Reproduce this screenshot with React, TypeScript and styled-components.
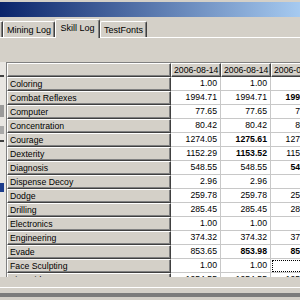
import React from "react";
import styled, { createGlobalStyle, css } from "styled-components";

const GlobalStyle = createGlobalStyle`
  html, body {
    margin: 0;
    padding: 0;
    background: #d4d0c8;
  }
  body {
    font-family: "Liberation Sans", Arial, sans-serif;
    font-size: 8.7px;
    color: #000;
  }
`;

type SkillRow = {
  name: string;
  values: [string, string, string];
  bold?: [boolean, boolean, boolean];
};

const dates = ["2006-08-14", "2006-08-14", "2006-08-14"];

const rows: SkillRow[] = [
  { name: "Coloring", values: ["1.00", "1.00", "1.00"] },
  { name: "Combat Reflexes", values: ["1994.71", "1994.71", "1995.30"], bold: [false, false, true] },
  { name: "Computer", values: ["77.65", "77.65", "77.65"] },
  { name: "Concentration", values: ["80.42", "80.42", "80.42"] },
  { name: "Courage", values: ["1274.05", "1275.61", "1275.61"], bold: [false, true, false] },
  { name: "Dexterity", values: ["1152.29", "1153.52", "1153.52"], bold: [false, true, false] },
  { name: "Diagnosis", values: ["548.55", "548.55", "549.80"], bold: [false, false, true] },
  { name: "Dispense Decoy", values: ["2.96", "2.96", "2.96"] },
  { name: "Dodge", values: ["259.78", "259.78", "259.78"] },
  { name: "Drilling", values: ["285.45", "285.45", "285.45"] },
  { name: "Electronics", values: ["1.00", "1.00", "1.00"] },
  { name: "Engineering", values: ["374.32", "374.32", "374.32"] },
  { name: "Evade", values: ["853.65", "853.98", "854.31"], bold: [false, true, true] },
  { name: "Face Sculpting", values: ["1.00", "1.00", ""] },
  { name: "First Aid", values: ["1954.55", "1954.55", "1954.55"] },
];

const tabs = [
  { label: "Mining Log", width: 52 },
  { label: "Skill Log", width: 45, active: true },
  { label: "TestFonts", width: 47 },
];

function App() {
  return (
    <>
      <GlobalStyle />
      <Window>
        <Caption />
        <TabStrip>
          <TabStub />
          {tabs.map((tab) => (
            <Tab key={tab.label} $active={!!tab.active} $width={tab.width}>
              {tab.label}
            </Tab>
          ))}
        </TabStrip>
        <Panel>
          <ListStub>
            <StubItem $top={13} $height={2} $color="#404040" />
            <StubItem $top={43} $height={12} $color="#9a9a9a" />
            <StubItem $top={64} $height={8} $color="#a8a8a8" />
            <StubItem $top={78} $height={2} $color="#404040" />
            <StubItem $top={121} $height={9} $color="#1c3c8c" />
          </ListStub>
          <Grid>
            <HeaderCell $wide />
            {dates.map((d, i) => (
              <HeaderCell key={i}>{d}</HeaderCell>
            ))}
            {rows.map((row) => (
              <React.Fragment key={row.name}>
                <NameCell>{row.name}</NameCell>
                {row.values.map((v, i) => (
                  <ValueCell
                    key={i}
                    $bold={row.bold ? row.bold[i] : false}
                    $focus={row.name === "Face Sculpting" && i === 2}
                  >
                    {v}
                  </ValueCell>
                ))}
              </React.Fragment>
            ))}
          </Grid>
        </Panel>
        <Footer />
      </Window>
    </>
  );
}

const Window = styled.div`
  width: 300px;
  height: 300px;
  overflow: hidden;
  background: #d4d0c8;
  display: flex;
  flex-direction: column;
`;

const Caption = styled.div`
  flex: none;
  height: 15px;
  margin-top: 2px;
  background: linear-gradient(to right, #0a246a, #a6caf0);
`;

const TabStrip = styled.div`
  flex: none;
  height: 18px;
  margin-top: 2px;
  display: flex;
  align-items: flex-end;
  position: relative;
  z-index: 1;
`;

const TabStub = styled.div`
  width: 3px;
  height: 16px;
  box-sizing: border-box;
  border-top: 1px solid #fff;
  border-right: 1px solid #404040;
  box-shadow: inset -1px 0 #808080;
`;

const Tab = styled.div<{ $active: boolean; $width: number }>`
  width: ${({ $width }) => $width}px;
  height: 16px;
  box-sizing: border-box;
  display: flex;
  align-items: center;
  justify-content: center;
  font-size: 9px;
  white-space: nowrap;
  background: #d4d0c8;
  border-top: 1px solid #fff;
  border-left: 1px solid #fff;
  border-right: 1px solid #404040;
  border-top-left-radius: 2px;
  border-top-right-radius: 2px;
  box-shadow: inset -1px 0 #808080;
  ${({ $active }) =>
    $active &&
    css`
      height: 19px;
      margin-bottom: -1px;
      padding-bottom: 2px;
    `}
`;

const Panel = styled.div`
  flex: none;
  height: 240px;
  box-sizing: border-box;
  border-top: 1px solid #fff;
  padding-top: 24px;
  display: flex;
  align-items: flex-start;
`;

const ListStub = styled.div`
  flex: none;
  width: 6px;
  height: 215px;
  position: relative;
  background: #e8e6e2;
`;

const StubItem = styled.div<{ $top: number; $height: number; $color: string }>`
  position: absolute;
  left: 0;
  width: 4px;
  top: ${({ $top }) => $top}px;
  height: ${({ $height }) => $height}px;
  background: ${({ $color }) => $color};
`;

const Grid = styled.div`
  flex: none;
  width: 294px;
  height: 215px;
  overflow: hidden;
  box-sizing: border-box;
  border-left: 1px solid #808080;
  border-top: 1px solid #808080;
  display: grid;
  grid-template-columns: 164px 50px 50px 50px;
  grid-auto-rows: 14px;
  background: #fff;
`;

const raised = css`
  box-sizing: border-box;
  background: #d4d0c8;
  border-top: 1px solid #fff;
  border-left: 1px solid #fff;
  border-right: 1px solid #404040;
  border-bottom: 1px solid #404040;
  box-shadow: inset -1px -1px #808080;
`;

const HeaderCell = styled.div<{ $wide?: boolean }>`
  ${raised}
  padding-left: 2px;
  line-height: 12px;
  white-space: nowrap;
  overflow: hidden;
`;

const NameCell = styled.div`
  ${raised}
  padding-left: 2px;
  line-height: 12px;
  white-space: nowrap;
`;

const ValueCell = styled.div<{ $bold: boolean; $focus: boolean }>`
  box-sizing: border-box;
  border-right: 1px solid #c8c8c8;
  border-bottom: 1px solid #c8c8c8;
  padding-right: 3px;
  text-align: right;
  line-height: 13px;
  white-space: nowrap;
  font-weight: ${({ $bold }) => ($bold ? 700 : 400)};
  ${({ $focus }) =>
    $focus &&
    css`
      outline: 1px dotted #000;
      outline-offset: -2px;
    `}
`;

const Footer = styled.div`
  flex: none;
  height: 5px;
  margin-top: 10px;
  border-top: 1px solid #fff;
  border-bottom: 4px solid #7c7c7c;
`;

export default App;
